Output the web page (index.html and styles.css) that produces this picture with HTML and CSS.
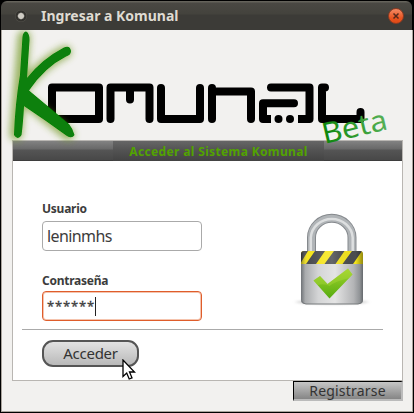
FILE: index.html
```html
<!DOCTYPE html>
<html lang="es">
<head>
<meta charset="utf-8">
<title>Ingresar a Komunal</title>
<link rel="stylesheet" href="styles.css">
</head>
<body>
<main class="window">
  <header class="titlebar">
    <span class="menu-dot"></span>
    <h1 class="title">Ingresar a Komunal</h1>
    <span class="close"><svg width="8" height="8" viewBox="0 0 8 8"><path d="M1.5 1.5 6.5 6.5M6.5 1.5 1.5 6.5" stroke="#54281c" stroke-width="1.5"/></svg></span>
  </header>
  <section class="panel">
    <h2 class="banner"><span class="banner-text">Acceder al Sistema Komunal</span></h2>
    <form class="form">
      <div class="fields">
        <div class="field">
          <label class="label">Usuario</label>
          <div class="input"><span class="name">leninmhs</span></div>
        </div>
        <div class="field">
          <label class="label">Contraseña</label>
          <div class="input focused"><span class="stars">******</span><i class="caret"></i></div>
        </div>
      </div>
      <svg class="lock" width="95" height="110" viewBox="280 205 95 110">
        <defs>
          <linearGradient id="steel"><stop offset="0" stop-color="#6f7377"/><stop offset=".07" stop-color="#aaacae"/><stop offset=".28" stop-color="#d4d5d6"/><stop offset=".55" stop-color="#e4e4e4"/><stop offset=".85" stop-color="#b3b4b6"/><stop offset=".95" stop-color="#8f9295"/><stop offset="1" stop-color="#65696d"/></linearGradient>
          <linearGradient id="tick" x1="0" y1="0" x2="0" y2="1"><stop offset="0" stop-color="#a4d52c"/><stop offset="1" stop-color="#55ab10"/></linearGradient>
          <linearGradient id="shade"><stop offset="0" stop-color="#000" stop-opacity=".4"/><stop offset=".12" stop-color="#fff" stop-opacity="0"/><stop offset=".5" stop-color="#fff" stop-opacity=".15"/><stop offset=".88" stop-color="#000" stop-opacity="0"/><stop offset="1" stop-color="#000" stop-opacity=".4"/></linearGradient>
          <clipPath id="band"><path d="M301 264V254q0-3 3-3h56q3 0 3 3v10z"/></clipPath>
          <filter id="soft" x="-20%" y="-100%" width="140%" height="300%"><feGaussianBlur stdDeviation="2 1"/></filter>
        </defs>
        <ellipse cx="332" cy="302" rx="36" ry="2.5" fill="#999" opacity=".4" filter="url(#soft)"/>
        <g fill="none">
          <path d="M311.500 252V237.500a20 19 0 0 1 40.500 0V252" stroke="#85898d" stroke-width="9"/>
          <path d="M311.500 252V237.500a20 19 0 0 1 40.500 0V252" stroke="#b0b4b7" stroke-width="7"/>
          <path d="M310.800 252V237.500a21 20 0 0 1 41.900 0V252" stroke="#dddfe0" stroke-width="2.500"/>
        </g>
        <path d="M301 256h62v44q0 4-4 4h-54q-4 0-4-4z" fill="url(#steel)"/>
        <path d="M302 301q1 3 4 3h52q3 0 4-3" fill="none" stroke="#777a7d"/>
        <g clip-path="url(#band)">
          <path d="M301 250h62v14h-62z" fill="#f5e51b"/>
          <path d="M300 251h8l-8 13zM315 251H325l-9 13H306zM334 251H344.500l-9 13H324.500zM352 251H362l-9 13H342.500z" fill="#4a4c4f"/>
          <path d="M301 250h62v14h-62z" fill="url(#shade)"/>
        </g>
        <path d="M313.500 280.500 320 276l7.500 8 20.500-15.500 4.500 6-23 24z" fill="url(#tick)"/>
        <path d="M313.500 280.500 320 276l7.500 8 20.500-15.500 4.500 6-3 3.500q-14 3-20 8-5-3-12-1z" fill="#b1dc43" opacity=".35"/>
      </svg>
    </form>
    <div class="actions"><button class="submit" type="button">Acceder</button></div>
  </section>
  <footer class="footer"><button class="register" type="button">Registrarse</button></footer>
  <svg class="logo" width="414" height="125" viewBox="0 30 414 125">
    <defs>
      <filter id="glow" x="-50%" y="-20%" width="200%" height="140%"><feGaussianBlur stdDeviation="3.500"/></filter>
      <filter id="brush"><feGaussianBlur stdDeviation=".6"/></filter>
      <linearGradient id="fade"><stop offset="0" stop-color="#0a850a"/><stop offset="1" stop-color="#58b158"/></linearGradient>
    </defs>
    <g fill="none" stroke="#000" stroke-width="8" stroke-linecap="round" stroke-linejoin="round">
      <path d="M52 87.500H99V119H52z"/>
      <path d="M110.500 119V87.500H149.500V119M130 88V99.500"/>
      <path d="M161 88V119H200V88"/>
      <path d="M212 88V119M212 91.500H251V119"/>
      <path d="M271 87.500H309.500V119"/>
      <path d="M294 103.300H263V119"/>
      <path d="M325 87.500H322V119H360.500V112"/>
      <path stroke-linecap="butt" d="M263 119H271M298 119H309.500"/>
    </g>
    <circle cx="278.500" cy="119" r="4"/><circle cx="290" cy="119" r="4"/>
    <g fill="none" stroke-linecap="round" stroke-linejoin="round">
      <path d="M24 37 16 134M65 52Q44 62 24 86M22 97 68 134" stroke="#779c2b" stroke-width="13" opacity=".7" filter="url(#glow)"/>
      <g fill="#078007" filter="url(#brush)">
        <path d="M26 31.500Q29.500 33 29.500 40Q28 62 27 78Q42 59 64 47.500Q70 45 71 51Q71 55 66 56.500Q45 67 29 90.500Q50 108 69 124Q73 129 74.500 135Q72 139 67 136Q45 120 24 106Q23 124 21.500 135Q18 141 14 135Q15 105 20 75L22.500 37Q23 32 26 31.500z"/>
      </g>
    </g>
    <text class="beta" transform="translate(324.500 144) rotate(-13)" textLength="66" lengthAdjust="spacingAndGlyphs" fill="url(#fade)">Beta</text>
  </svg>
  <svg class="cursor" width="14" height="22" viewBox="0 0 14 22"><path d="M1 1V17.500L4.700 14 7.200 20 10 18.800 7.500 13H12.500z" fill="#fff" stroke="#000" stroke-width="1.300"/></svg>
</main>
</body>
</html>
```
FILE: styles.css
```css
* { box-sizing: border-box; }
body { margin: 0; background: #000; font-family: "Noto Sans", "Open Sans", sans-serif; color: #3c3c3c; }
.window { position: relative; width: 414px; height: 413px; padding: 1px 2px 2px 1px; background: #000; overflow: hidden; }
.window::before { content: ""; position: absolute; inset: 30px 1px 1px 1px; background: #f2f1ef; border: 1px solid #aaa49d; border-top: 0; }
.titlebar { position: relative; height: 29px; padding: 0 8px 0 14px; display: flex; align-items: center; background: linear-gradient(#65635b 0 1px, #4a4843 2px, #44433d 13px, #3c3b37 14px); border-radius: 6px 6px 0 0; }
.menu-dot { width: 12px; height: 12px; border-radius: 50%; background: radial-gradient(circle, #cfccc4 0 2.500px, #33322e 3.800px 5px, #55534d 6px); }
.title { margin: 0 auto 0 14px; font-size: 14px; line-height: 28px; color: #dfdbd2; width: 137px; white-space: nowrap; }
.close { width: 16px; height: 16px; border-radius: 50%; border: 1px solid #8f3b22; background: linear-gradient(#f28b66, #e95420 65%, #df4a16); display: grid; place-items: center; }
.panel { position: relative; width: 391px; height: 241px; margin: 110px 0 0 11px; border: 1px solid #b9b6b2; background: #fff; }
.banner { margin: 0; height: 20px; display: flex; background: linear-gradient(#828282, #686868 8px, #555 9px, #484848 19px, #333); }
.banner-text { width: 211px; margin-left: 100px; text-align: center; background: linear-gradient(#666, #555 8px, #434343); color: #52a300; font-size: 12px; letter-spacing: .36px; line-height: 22px; white-space: nowrap; }
.form { display: flex; justify-content: space-between; margin: 0; height: 169px; border-bottom: 1px solid #aaa; width: 361px; margin-left: 9px; }
.fields { padding: 39px 0 0 20px; }
.field { height: 72px; }
.field + .field { margin-top: -1px; }
.label { display: block; height: 21px; font-size: 12px; font-weight: 700; line-height: 17px; letter-spacing: -.25px; }
.field + .field .label { height: 20px; line-height: 20px; }
.input { width: 160px; height: 30px; border: 1px solid #aaa; border-radius: 4px; padding-left: 4px; display: flex; align-items: center; font-size: 16px; line-height: 26px; }
.name { letter-spacing: -.6px; }
.stars { font-size: 13px; letter-spacing: .85px; width: 48px; -webkit-text-stroke: .3px; }
.focused { border-color: #df5d2b; box-shadow: inset 0 0 0 1px #f5c4ae; }
.caret { width: 1px; height: 19px; background: #222; }
.lock { margin: 44px 8px 0 0; }
.actions { padding: 10px 0 0 29px; }
.submit { display: block; width: 97px; height: 27px; padding: 0; border: 2px solid #555; border-radius: 11px; background: linear-gradient(#e2e2e2, #b9b9b9); font: 15px/21px "Noto Sans", sans-serif; letter-spacing: -.25px; color: #333; }
.footer { position: relative; display: flex; justify-content: flex-end; padding-right: 9px; }
.register { width: 110px; height: 20px; padding: 0; border: 1px solid; border-color: #000 #bbb #bbb #000; border-width: 1px 2px 2px 1px; background: linear-gradient(#c6c6c6, #858585); font: 14px/17px "Noto Sans", sans-serif; letter-spacing: .2px; color: #333; }
.logo { position: absolute; left: 0; top: 30px; pointer-events: none; }
.beta { font: 29px "Noto Sans", sans-serif; }
.cursor { position: absolute; left: 122px; top: 359px; }
```
